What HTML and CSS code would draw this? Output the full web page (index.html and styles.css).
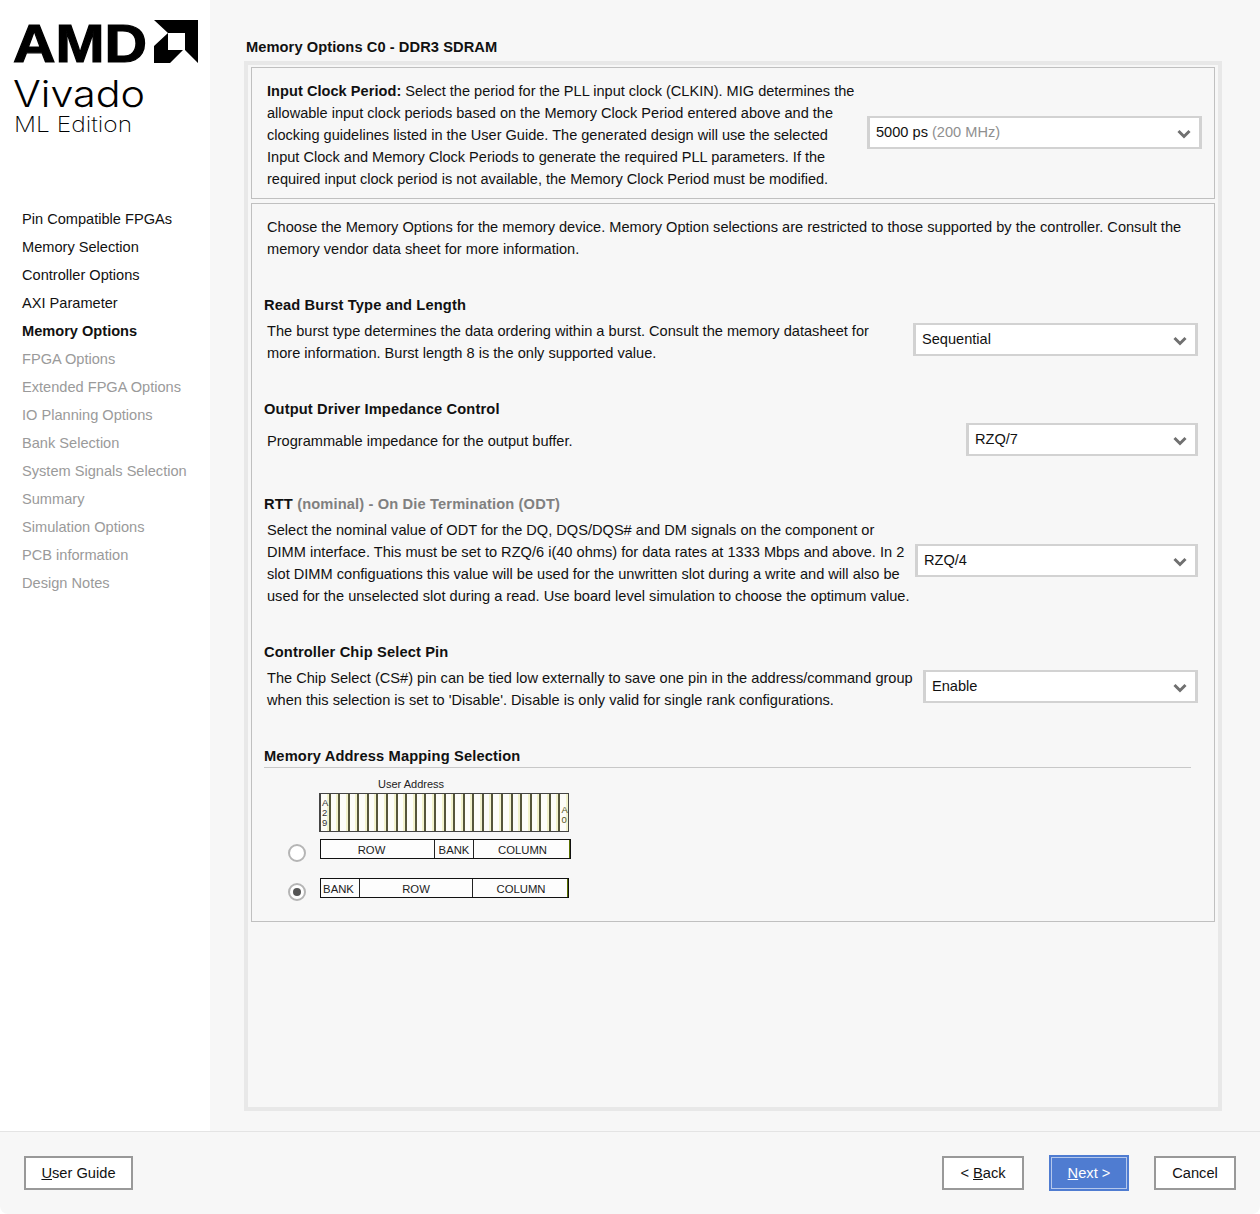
FILE: index.html
```html
<!DOCTYPE html>
<html lang="en">
<head>
  <meta charset="UTF-8">
  <title>Memory Options</title>
  <link rel="stylesheet" href="styles.css">
</head>
<body>
  <div class="app">
    <div class="top">
      <aside class="sidebar">
        <svg class="logo" width="210" height="140" viewBox="0 0 210 140">
          <text class="logo-amd" x="13" y="62" textLength="134" lengthAdjust="spacingAndGlyphs">AMD</text>
          <polygon points="154,20 198,20 198,63 185,50 185,33 168,33"/>
          <polygon points="154,46 168,33 168,50 183,50 170,63 154,63"/>
          <text class="logo-name">
            <tspan class="logo-vivado" x="13" y="107" textLength="132" lengthAdjust="spacingAndGlyphs">Vivado</tspan>
            <tspan class="logo-ml" x="14" y="132" textLength="118" lengthAdjust="spacingAndGlyphs">ML Edition</tspan>
          </text>
        </svg>
        <ul class="steps">
          <li>Pin Compatible FPGAs</li>
          <li>Memory Selection</li>
          <li>Controller Options</li>
          <li>AXI Parameter</li>
          <li class="current">Memory Options</li>
          <li class="todo">FPGA Options</li>
          <li class="todo">Extended FPGA Options</li>
          <li class="todo">IO Planning Options</li>
          <li class="todo">Bank Selection</li>
          <li class="todo">System Signals Selection</li>
          <li class="todo">Summary</li>
          <li class="todo">Simulation Options</li>
          <li class="todo">PCB information</li>
          <li class="todo">Design Notes</li>
        </ul>
      </aside>
      <main class="content">
        <h1 class="page-title">Memory Options C0 - DDR3 SDRAM</h1>
        <div class="frame">
          <section class="box clock-box">
            <p class="text"><b>Input Clock Period:</b> Select the period for the PLL input clock (CLKIN). MIG determines the<br>allowable input clock periods based on the Memory Clock Period entered above and the<br>clocking guidelines listed in the User Guide. The generated design will use the selected<br>Input Clock and Memory Clock Periods to generate the required PLL parameters. If the<br>required input clock period is not available, the Memory Clock Period must be modified.</p>
            <div class="select select-clock">
              <span class="value">5000 ps <span class="muted">(200 MHz)</span></span>
              <svg class="chevron" width="14" height="10" viewBox="0 0 14 10"><path d="M1.5 2 7 7.5 12.5 2"/></svg>
            </div>
          </section>
          <section class="box options-box">
            <p class="text">Choose the Memory Options for the memory device. Memory Option selections are restricted to those supported by the controller. Consult the<br>memory vendor data sheet for more information.</p>

            <h2 class="opt-title first">Read Burst Type and Length</h2>
            <div class="opt-row">
              <p class="text">The burst type determines the data ordering within a burst. Consult the memory datasheet for<br>more information. Burst length 8 is the only supported value.</p>
              <div class="select select-burst">
                <span class="value">Sequential</span>
                <svg class="chevron" width="14" height="10" viewBox="0 0 14 10"><path d="M1.5 2 7 7.5 12.5 2"/></svg>
              </div>
            </div>

            <h2 class="opt-title">Output Driver Impedance Control</h2>
            <div class="opt-row single">
              <p class="text">Programmable impedance for the output buffer.</p>
              <div class="select select-odi">
                <span class="value">RZQ/7</span>
                <svg class="chevron" width="14" height="10" viewBox="0 0 14 10"><path d="M1.5 2 7 7.5 12.5 2"/></svg>
              </div>
            </div>

            <h2 class="opt-title">RTT <span class="muted-title">(nominal) - On Die Termination (ODT)</span></h2>
            <div class="opt-row">
              <p class="text">Select the nominal value of ODT for the DQ, DQS/DQS# and DM signals on the component or<br>DIMM interface. This must be set to RZQ/6 i(40 ohms) for data rates at 1333 Mbps and above. In 2<br>slot DIMM configuations this value will be used for the unwritten slot during a write and will also be<br>used for the unselected slot during a read. Use board level simulation to choose the optimum value.</p>
              <div class="select select-rtt">
                <span class="value">RZQ/4</span>
                <svg class="chevron" width="14" height="10" viewBox="0 0 14 10"><path d="M1.5 2 7 7.5 12.5 2"/></svg>
              </div>
            </div>

            <h2 class="opt-title">Controller Chip Select Pin</h2>
            <div class="opt-row">
              <p class="text">The Chip Select (CS#) pin can be tied low externally to save one pin in the address/command group<br>when this selection is set to 'Disable'. Disable is only valid for single rank configurations.</p>
              <div class="select select-cs">
                <span class="value">Enable</span>
                <svg class="chevron" width="14" height="10" viewBox="0 0 14 10"><path d="M1.5 2 7 7.5 12.5 2"/></svg>
              </div>
            </div>

            <h2 class="opt-title ruled">Memory Address Mapping Selection</h2>
            <div class="mapping">
              <div class="map-label">User Address</div>
              <div class="bits">
                <span class="bit tag">A<br>2<br>9</span><span class="bit"></span><span class="bit"></span><span class="bit"></span><span class="bit"></span><span class="bit"></span><span class="bit"></span><span class="bit"></span><span class="bit"></span><span class="bit"></span><span class="bit"></span><span class="bit"></span><span class="bit"></span><span class="bit"></span><span class="bit"></span><span class="bit"></span><span class="bit"></span><span class="bit"></span><span class="bit"></span><span class="bit"></span><span class="bit"></span><span class="bit"></span><span class="bit"></span><span class="bit"></span><span class="bit"></span><span class="bit tag low">A<br>0</span>
              </div>
              <div class="map-option">
                <span class="radio"></span>
                <div class="map-row">
                  <span class="seg w114 shift">ROW</span><span class="seg w39">BANK</span><span class="seg w96 col">COLUMN</span>
                </div>
              </div>
              <div class="map-option second">
                <span class="radio checked"></span>
                <div class="map-row">
                  <span class="seg w39 bank-left">BANK</span><span class="seg w113">ROW</span><span class="seg w95 col">COLUMN</span>
                </div>
              </div>
            </div>
          </section>
        </div>
      </main>
    </div>
    <footer class="footer">
      <button class="btn btn-guide"><u>U</u>ser Guide</button>
      <div class="nav-btns">
        <button class="btn">&lt; <u>B</u>ack</button>
        <button class="btn btn-next"><u>N</u>ext &gt;</button>
        <button class="btn">Cancel</button>
      </div>
    </footer>
  </div>
</body>
</html>
```

FILE: styles.css
```css
* {
  box-sizing: border-box;
  margin: 0;
  padding: 0;
}
body {
  font-family: "Liberation Sans", Arial, sans-serif;
  font-size: 14.6px;
  line-height: 22px;
  color: #111;
  background: #fff;
  width: 1260px;
  height: 1214px;
  overflow: hidden;
}
b {
  letter-spacing: 0.05px;
}
.app {
  height: 1214px;
  display: flex;
  flex-direction: column;
  background: #f7f7f7;
  border-radius: 0 0 8px 8px;
  overflow: hidden;
}
.top {
  display: flex;
  height: 1131px;
}

/* Sidebar */
.sidebar {
  width: 210px;
  flex: none;
  background: #fff;
}
.logo {
  display: block;
  fill: #000;
}
.logo-amd {
  font-family: "Liberation Sans", sans-serif;
  font-weight: 700;
  font-size: 54px;
  stroke: #000;
  stroke-width: 1.2px;
}
.logo-name {
  font-family: "Inter", sans-serif;
}
.logo-vivado {
  font-weight: 300;
  font-size: 37px;
}
.logo-ml {
  font-weight: 200;
  font-size: 21px;
}
.steps {
  list-style: none;
  margin-top: 65px;
  padding-left: 22px;
}
.steps li {
  height: 28px;
  line-height: 28px;
  white-space: nowrap;
}
.steps .current {
  font-weight: 700;
}
.steps .todo {
  color: #9a9a9a;
}

/* Main panel */
.content {
  flex: 1;
  padding: 36px 38px 20px 34px;
  display: flex;
  flex-direction: column;
}
.page-title {
  font-size: 14.67px;
  font-weight: 700;
  line-height: 22px;
  letter-spacing: 0.07px;
  padding-left: 2px;
  margin-bottom: 3px;
}
.frame {
  flex: 1;
  border: 4px solid #e8e8e8;
  padding: 2px 3px;
}
.box {
  border: 1px solid #c0c0c0;
  padding-left: 15px;
}
.clock-box {
  display: flex;
  align-items: center;
  height: 132px;
  padding-right: 12px;
  margin-bottom: 4px;
}
.clock-box .text {
  font-size: 14.55px;
  padding-top: 4px;
}
.options-box {
  height: 719px;
  padding-top: 12px;
  padding-right: 16px;
}
.text {
  white-space: nowrap;
}
.muted {
  color: #8f8f8f;
}

/* Option blocks */
.opt-title {
  font-size: 14.67px;
  font-weight: 700;
  line-height: 22px;
  letter-spacing: 0.14px;
  margin: 34px 0 0 -3px;
}
.muted-title {
  color: #808080;
}
.opt-row {
  display: flex;
  align-items: center;
  justify-content: space-between;
  margin-top: 4px;
}
.opt-row .select {
  margin-bottom: 5px;
}
.opt-row.single {
  margin-top: 3px;
  padding-bottom: 3px;
}
.opt-row.single .select {
  margin-bottom: 0;
}
.opt-row.single .text {
  padding-top: 2px;
}
.select {
  flex: none;
  height: 33px;
  display: flex;
  align-items: center;
  justify-content: space-between;
  background: #fff;
  border: 3px solid #d2d2d2;
  border-top-width: 2px;
  border-bottom-width: 2px;
  padding: 0 8px 0 6px;
}
.value {
  padding-bottom: 2px;
}
.chevron {
  fill: none;
  stroke: #707070;
  stroke-width: 3px;
  margin-top: 2px;
}
.select-clock { width: 335px; margin-left: auto; margin-bottom: 1px; }
.select-burst { width: 285px; }
.select-odi { width: 232px; }
.select-rtt { width: 283px; }
.select-cs { width: 275px; }

/* Address mapping */
.opt-title.ruled {
  border-bottom: 1px solid #c8c8c8;
  height: 23px;
  margin-right: 7px;
}
.mapping {
  padding-top: 8px;
  margin-left: 21px;
}
.map-label {
  font-size: 11px;
  line-height: 16px;
  margin-left: 90px;
  color: #222;
}
.bits {
  display: flex;
  width: 250px;
  height: 39px;
  margin: 1px 0 0 31px;
  border: 1px solid #444;
  border-left-width: 2px;
}
.bit {
  flex: 1;
  border-right: 2px solid #55553a;
  box-shadow: inset -2px 0 0 #f2f2cc;
  background: #fcfcf8;
  font-size: 9.5px;
  line-height: 10px;
  padding: 4px 0 0 1px;
  color: #333;
  overflow: hidden;
}
.bit:last-child {
  border-right: 0;
}
.bit.low {
  padding-top: 11px;
  color: #555520;
}
.map-option {
  display: flex;
  align-items: flex-end;
  margin-top: 7px;
}
.map-option.second {
  margin-top: 19px;
}
.radio {
  width: 18px;
  height: 18px;
  flex: none;
  border: 2px solid #b5b5b5;
  border-radius: 50%;
  background: #fff;
  margin: 0 14px 0 0;
  position: relative;
  top: 3px;
  display: flex;
  align-items: center;
  justify-content: center;
}
.radio.checked::after {
  content: "";
  width: 8px;
  height: 8px;
  border-radius: 50%;
  background: #555;
}
.map-row {
  display: flex;
  height: 20px;
  border: 1px solid #111;
  background: #fdfdfd;
}
.seg {
  font-size: 11.3px;
  line-height: 20px;
  text-align: center;
  border-right: 1px solid #222;
  color: #222;
}
.seg.col {
  border-right: 1px solid #5a7000;
  padding-left: 2px;
}
.seg.shift {
  padding-right: 12px;
}
.seg.bank-left {
  padding-right: 3px;
}
.w114 { width: 114px; }
.w39 { width: 39px; }
.w96 { width: 96px; }
.w113 { width: 113px; }
.w95 { width: 95px; }

/* Footer */
.footer {
  flex: 1;
  border-top: 1px solid #e4e4e4;
  display: flex;
  align-items: center;
  justify-content: space-between;
  padding: 0 24px;
}
.nav-btns {
  display: flex;
  align-items: center;
  gap: 25px;
}
.btn {
  width: 82px;
  height: 34px;
  background: #fff;
  border: 2px solid #999;
  font-family: inherit;
  font-size: 14.67px;
  color: #111;
}
.btn-guide {
  width: 109px;
}
.btn-next {
  width: 80px;
  height: 36px;
  background: #4f7cd1;
  color: #fff;
  border: 2px solid #4f7cd1;
  outline: 1px solid #b5c8ec;
  outline-offset: -3px;
}
```
